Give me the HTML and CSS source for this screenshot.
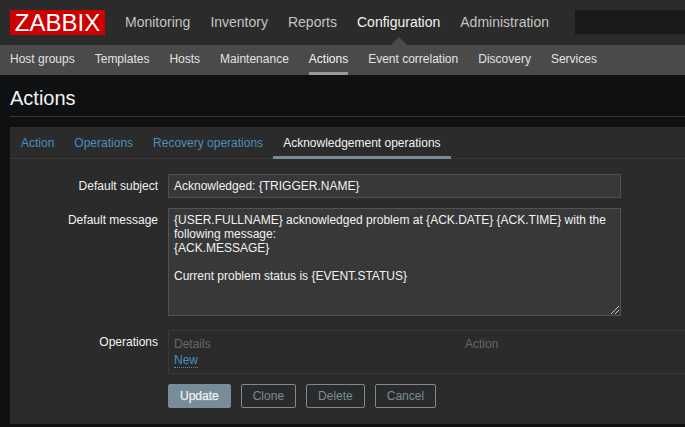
FILE: index.html
```html
<!DOCTYPE html>
<html lang="en">
<head>
<meta charset="utf-8">
<title>Actions</title>
<link rel="stylesheet" href="styles.css">
</head>
<body>
<header class="topbar">
  <a class="logo">ZABBIX</a>
  <nav class="mainnav">
    <a>Monitoring</a>
    <a>Inventory</a>
    <a>Reports</a>
    <a class="current">Configuration</a>
    <a>Administration</a>
  </nav>
  <div class="search"></div>
</header>
<nav class="subnav">
  <a>Host groups</a>
  <a>Templates</a>
  <a>Hosts</a>
  <a>Maintenance</a>
  <a class="current">Actions</a>
  <a>Event correlation</a>
  <a>Discovery</a>
  <a>Services</a>
</nav>
<main class="content">
  <h1 class="title">Actions</h1>
  <section class="card">
    <div class="tabs">
      <a>Action</a>
      <a>Operations</a>
      <a>Recovery operations</a>
      <a class="current">Acknowledgement operations</a>
    </div>
    <form class="form">
      <div class="row">
        <label class="label">Default subject</label>
        <div class="field input">Acknowledged: {TRIGGER.NAME}</div>
      </div>
      <div class="row">
        <label class="label">Default message</label>
        <div class="field textarea">{USER.FULLNAME} acknowledged problem at {ACK.DATE} {ACK.TIME} with the following message:<br>{ACK.MESSAGE}<br><br>Current problem status is {EVENT.STATUS}
          <svg class="grip" width="10" height="10" viewBox="0 0 10 10"><path d="M1 9L9 1M5 9L9 5" stroke="#c4c4c4" stroke-width="1" fill="none"/></svg>
        </div>
      </div>
      <div class="row ops-row">
        <label class="label">Operations</label>
        <div class="ops">
          <div class="ops-head"><span class="ops-details">Details</span><span>Action</span></div>
          <a class="new">New</a>
        </div>
      </div>
      <div class="buttons">
        <button type="button" class="btn primary">Update</button>
        <button type="button" class="btn">Clone</button>
        <button type="button" class="btn">Delete</button>
        <button type="button" class="btn">Cancel</button>
      </div>
    </form>
  </section>
</main>
</body>
</html>
```
FILE: styles.css
```css
* { box-sizing: border-box; }
html, body { margin: 0; height: 427px; overflow: hidden; }
body { background: #0e1012; color: #f2f2f2; font: 12px/14px "Liberation Sans", Arial, sans-serif; width: 685px; }

.topbar { height: 45px; background: #2b2b2b; display: flex; align-items: flex-start; padding-left: 10px; }
.logo { width: 95px; height: 25px; margin-top: 10px; background: #cd0000; color: #fff; font-size: 24px; line-height: 25px; text-align: center; flex: none; }
.mainnav { display: flex; gap: 20px; margin: 13px 0 0 20px; font-size: 14px; line-height: 18px; color: #c4c4c4; }
.mainnav .current { color: #f2f2f2; position: relative; }
.mainnav .current::after { content: ""; position: absolute; left: 50%; bottom: -14px; margin-left: -8px; border: 8px solid transparent; border-top: 0; border-bottom-color: #4a4a4a; }
.search { flex: 1; height: 24px; margin: 10px 0 0 26px; background: #1a1a1a; }

.subnav { height: 30px; background: #4a4a4a; display: flex; gap: 20px; padding-left: 10px; color: #e2e2e2; line-height: 29px; }
.subnav a { display: block; height: 30px; }
.subnav .current { color: #f2f2f2; border-bottom: 3px solid #9a9a9a; }

.content { padding: 0 0 0 10px; }
.title { margin: 0; height: 42px; border-bottom: 1px solid #383838; font-size: 20px; font-weight: normal; line-height: 46px; color: #f2f2f2; }

.card { margin-top: 10px; height: 297px; background: #2b2b2b; }
.tabs { height: 32px; display: flex; padding-left: 1px; border-bottom: 1px solid #383838; line-height: 32px; color: #4a8fbd; }
.tabs a { padding: 0 10px; height: 32px; }
.tabs .current { color: #f2f2f2; border-bottom: 3px solid #768d99; }

.form { padding-top: 15px; }
.row { display: flex; margin-bottom: 10px; }
.label { width: 148px; flex: none; text-align: right; color: #f2f2f2; padding-top: 5px; margin-right: 10px; }
.field { background: #383838; border: 1px solid #4f4f4f; color: #f2f2f2; width: 453px; padding: 4px 5px; position: relative; }
.input { height: 24px; padding-top: 4px; }
.textarea { height: 108px; border-color: #525252; }
.grip { position: absolute; right: 0; bottom: 0; }

.ops-row { margin-top: 14px; margin-bottom: 10px; }
.ops { flex: 1; height: 44px; border: 1px solid #383838; border-right: 0; padding: 6px 5px 0; }
.ops-head { display: flex; color: #686868; height: 16px; }
.ops-details { width: 291px; }
.new { color: #4a8fbd; border-bottom: 1px dotted #4a8fbd; }

.buttons { display: flex; gap: 10px; padding-left: 158px; }
.btn { height: 24px; padding: 0 11px; font: 12px/14px "Liberation Sans", Arial, sans-serif; color: #768d99; background: transparent; border: 1px solid #768d99; border-radius: 2px; }
.btn.primary { background: #768d99; color: #f2f2f2; -webkit-text-stroke: 0.25px #f2f2f2; }
```
